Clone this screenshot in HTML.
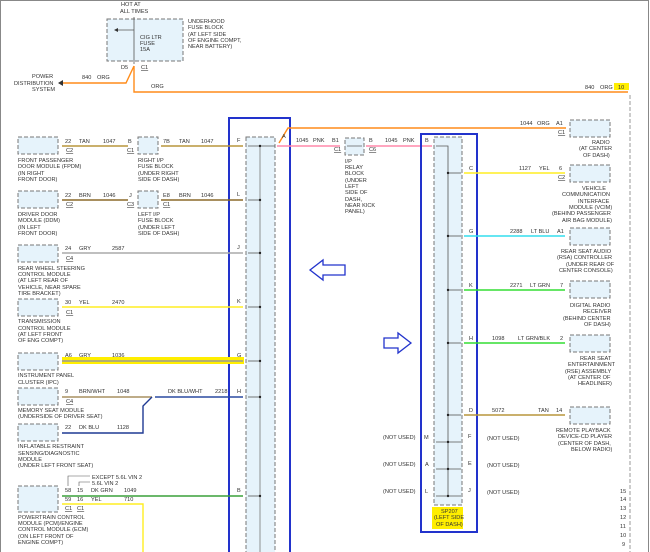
<!DOCTYPE html>
<html><head><meta charset="utf-8"><style>
html,body{margin:0;padding:0;background:#fff}
svg{display:block}
text{font-family:"Liberation Sans",sans-serif;font-size:5.6px;fill:#333}
.b{fill:#e6f3fb;stroke:#777;stroke-dasharray:4,2;stroke-width:1}
.w{fill:none;stroke-width:1.4}
</style></head><body>
<svg width="650" height="552" viewBox="0 0 650 552" xmlns="http://www.w3.org/2000/svg">
<rect x="0.5" y="0.5" width="648" height="560" fill="none" stroke="#888"/>
<!-- top fuse block -->
<text x="121" y="6">HOT AT</text><text x="120" y="13">ALL TIMES</text>
<rect class="b" x="107" y="19" width="76" height="42"/>
<line x1="134" y1="17" x2="134" y2="64" stroke="#555" stroke-width="0.8"/>
<line x1="134" y1="30" x2="117" y2="30" stroke="#555" stroke-width="0.8"/><path d="M114 30l4-2v4z" fill="#333"/>
<text x="140" y="39">CIG LTR</text><text x="140" y="45">FUSE</text><text x="140" y="51">15A</text>
<text x="188" y="23">UNDERHOOD</text><text x="188" y="29">FUSE BLOCK</text><text x="188" y="36">(AT LEFT SIDE</text><text x="188" y="42">OF ENGINE COMPT,</text><text x="188" y="48">NEAR BATTERY)</text>
<text x="121" y="69">D5</text><text x="141" y="69" text-decoration="underline">C1</text>
<path class="w" stroke="#ff8c1a" d="M134 66L126 83H62"/><path d="M58 83l5-3v6z" fill="#333"/>
<text x="82" y="79">840</text><text x="97" y="79">ORG</text>
<text x="32" y="78">POWER</text><text x="14" y="85">DISTRIBUTION</text><text x="32" y="91">SYSTEM</text>
<path class="w" stroke="#ff8c1a" d="M134 66V92H628"/>
<text x="151" y="88">ORG</text>
<text x="585" y="89">840</text><text x="600" y="89">ORG</text>
<rect x="614" y="83" width="15" height="7" fill="#ffee00"/><text x="618" y="89">10</text>
<line x1="630" y1="95" x2="630" y2="552" stroke="#999" stroke-dasharray="4,2"/>
<g font-size="5.4">
<text x="620" y="493">15</text><text x="620" y="501">14</text><text x="620" y="510">13</text><text x="620" y="519">12</text><text x="620" y="528">11</text><text x="620" y="537">10</text><text x="622" y="546">9</text>
</g>
<!-- left splice -->
<rect x="229" y="118" width="61" height="440" fill="none" stroke="#2233cc" stroke-width="2"/>
<rect class="b" x="246" y="137" width="29" height="420"/>
<line x1="260" y1="146" x2="260" y2="552" stroke="#777" stroke-width="0.8"/>
<!-- orange to radio -->
<path class="w" stroke="#ff8c1a" d="M279 143L288 128H566"/>
<text x="282" y="138">A</text>
<text x="520" y="125">1044</text><text x="537" y="125">ORG</text><text x="556" y="125">A1</text><text x="558" y="134" text-decoration="underline">C1</text>
<rect class="b" x="570" y="120" width="40" height="17"/>
<text x="592" y="144">RADIO</text><text x="579" y="150">(AT CENTER</text><text x="583" y="157">OF DASH)</text>
<!-- pink -->
<path class="w" stroke="#ff88aa" d="M277 146H340M366 146H432"/>
<text x="296" y="142">1045</text><text x="313" y="142">PNK</text><text x="332" y="142">B1</text><text x="334" y="151" text-decoration="underline">C1</text>
<rect class="b" x="345" y="138" width="19" height="17"/><line x1="347" y1="146" x2="362" y2="146" stroke="#555" stroke-width="0.7"/>
<text x="369" y="142">B</text><text x="369" y="151" text-decoration="underline">C6</text>
<text x="385" y="142">1045</text><text x="403" y="142">PNK</text><text x="425" y="142">B</text>
<text x="345" y="163">I/P</text><text x="345" y="169">RELAY</text><text x="345" y="175">BLOCK</text><text x="345" y="182">(UNDER</text><text x="345" y="188">LEFT</text><text x="345" y="194">SIDE OF</text><text x="345" y="201">DASH,</text><text x="345" y="207">NEAR KICK</text><text x="345" y="213">PANEL)</text>
<!-- right splice -->
<rect x="421" y="134" width="56" height="398" fill="none" stroke="#2233cc" stroke-width="2"/>
<rect class="b" x="434" y="137" width="28" height="368"/>
<path d="M436 146H448V496" fill="none" stroke="#555" stroke-width="0.8"/>
<rect x="432" y="507" width="31" height="22" fill="#ffee00"/>
<text x="441" y="513">SP207</text><text x="434" y="519">(LEFT SIDE</text><text x="436" y="526">OF DASH)</text>
<!-- right wires -->
<path class="w" stroke="#ffee22" d="M464 173H565"/>
<path class="w" stroke="#33ddee" d="M464 236H565"/>
<path class="w" stroke="#33dd33" d="M464 290H565"/>
<path class="w" stroke="#33dd33" d="M464 343H565"/>
<path class="w" stroke="#b8963c" d="M464 415H565"/>
<g stroke="#555" stroke-width="0.8">
<line x1="448" y1="173" x2="461" y2="173"/><line x1="448" y1="236" x2="461" y2="236"/><line x1="448" y1="290" x2="461" y2="290"/><line x1="448" y1="343" x2="461" y2="343"/><line x1="448" y1="415" x2="461" y2="415"/>
<line x1="436" y1="442" x2="461" y2="442"/><line x1="436" y1="469" x2="461" y2="469"/><line x1="436" y1="496" x2="461" y2="496"/>
</g>
<g fill="#222"><circle cx="448" cy="173" r="1.2"/><circle cx="448" cy="236" r="1.2"/><circle cx="448" cy="290" r="1.2"/><circle cx="448" cy="343" r="1.2"/><circle cx="448" cy="415" r="1.2"/><circle cx="448" cy="442" r="1.2"/><circle cx="448" cy="469" r="1.2"/><circle cx="448" cy="496" r="1.2"/></g>
<text x="469" y="170">C</text><text x="519" y="170">1127</text><text x="539" y="170">YEL</text><text x="559" y="170">6</text><text x="558" y="179" text-decoration="underline">C2</text>
<rect class="b" x="570" y="165" width="40" height="17"/>
<text x="582" y="190">VEHICLE</text><text x="562" y="196">COMMUNICATION</text><text x="578" y="203">INTERFACE</text><text x="569" y="209">MODULE (VCIM)</text><text x="552" y="215">(BEHIND PASSENGER</text><text x="562" y="222">AIR BAG MODULE)</text>
<text x="469" y="233">G</text><text x="510" y="233">2288</text><text x="531" y="233">LT BLU</text><text x="557" y="233">A1</text>
<rect class="b" x="570" y="228" width="40" height="17"/>
<text x="561" y="253">REAR SEAT AUDIO</text><text x="557" y="259">(RSA) CONTROLLER</text><text x="566" y="266">(UNDER REAR OF</text><text x="559" y="272">CENTER CONSOLE)</text>
<text x="469" y="287">K</text><text x="510" y="287">2271</text><text x="530" y="287">LT GRN</text><text x="560" y="287">7</text>
<rect class="b" x="570" y="281" width="40" height="17"/>
<text x="570" y="307">DIGITAL RADIO</text><text x="583" y="313">RECEIVER</text><text x="563" y="320">(BEHIND CENTER</text><text x="584" y="326">OF DASH)</text>
<text x="469" y="340">H</text><text x="492" y="340">1098</text><text x="518" y="340">LT GRN/BLK</text><text x="560" y="340">2</text>
<rect class="b" x="570" y="335" width="40" height="17"/>
<text x="580" y="360">REAR SEAT</text><text x="568" y="366">ENTERTAINMENT</text><text x="565" y="373">(RSE) ASSEMBLY</text><text x="568" y="379">(AT CENTER OF</text><text x="578" y="385">HEADLINER)</text>
<text x="469" y="412">D</text><text x="492" y="412">5072</text><text x="538" y="412">TAN</text><text x="556" y="412">14</text>
<rect class="b" x="570" y="407" width="40" height="17"/>
<text x="556" y="432">REMOTE PLAYBACK</text><text x="558" y="438">DEVICE-CD PLAYER</text><text x="558" y="445">(CENTER OF DASH,</text><text x="571" y="451">BELOW RADIO)</text>
<text x="383" y="439">(NOT USED)</text><text x="424" y="439">M</text><text x="468" y="438">F</text><text x="487" y="440">(NOT USED)</text>
<text x="383" y="466">(NOT USED)</text><text x="425" y="466">A</text><text x="468" y="465">E</text><text x="487" y="467">(NOT USED)</text>
<text x="383" y="493">(NOT USED)</text><text x="425" y="493">L</text><text x="468" y="492">J</text><text x="487" y="494">(NOT USED)</text>
<!-- arrows -->
<path d="M310 270L323 260V265H345V275H323V280Z" fill="#fff" stroke="#2233cc" stroke-width="1.3"/>
<path d="M411 343L398 333V338H384V348H398V353Z" fill="#fff" stroke="#2233cc" stroke-width="1.3"/>
<!-- left wires -->
<path class="w" stroke="#b8963c" d="M62 146H128M161 146H243"/>
<path class="w" stroke="#8b6a2a" d="M62 200H128M161 200H243"/>
<path class="w" stroke="#aaaaaa" d="M62 253H243"/>
<path class="w" stroke="#ffee22" d="M62 307H243"/>
<rect x="62" y="357" width="182" height="7" fill="#ffee00"/><path class="w" stroke="#999" d="M62 361H243"/>
<path class="w" stroke="#a89060" d="M62 397H152"/>
<path class="w" stroke="#2a4aa0" d="M155 397H243"/>
<path class="w" stroke="#1f3a93" d="M62 433H143V406L152 397"/>
<path class="w" stroke="#3aa03a" stroke-width="2" d="M62 496H243"/>
<path class="w" stroke="#ffee22" d="M62 504H143V552"/>
<g stroke="#555" stroke-width="0.8"><line x1="248" y1="146" x2="275" y2="146"/><line x1="248" y1="200" x2="260" y2="200"/><line x1="248" y1="253" x2="260" y2="253"/><line x1="248" y1="307" x2="260" y2="307"/><line x1="248" y1="361" x2="260" y2="361"/><line x1="248" y1="397" x2="260" y2="397"/><line x1="248" y1="496" x2="260" y2="496"/></g>
<g fill="#222"><circle cx="260" cy="146" r="1.2"/><circle cx="260" cy="200" r="1.2"/><circle cx="260" cy="253" r="1.2"/><circle cx="260" cy="307" r="1.2"/><circle cx="260" cy="361" r="1.2"/><circle cx="260" cy="397" r="1.2"/><circle cx="260" cy="496" r="1.2"/></g>
<text x="237" y="142">F</text><text x="237" y="196">L</text><text x="237" y="249">J</text><text x="237" y="303">K</text><text x="237" y="357">G</text><text x="237" y="393">H</text><text x="237" y="492">B</text>
<!-- FPDM -->
<rect class="b" x="18" y="137" width="40" height="17"/>
<text x="65" y="143">22</text><text x="79" y="143">TAN</text><text x="103" y="143">1047</text><text x="128" y="143">B</text><text x="127" y="152" text-decoration="underline">C1</text><text x="66" y="152" text-decoration="underline">C2</text>
<rect class="b" x="138" y="137" width="20" height="17"/>
<text x="163" y="143">7B</text><text x="179" y="143">TAN</text><text x="201" y="143">1047</text>
<text x="18" y="162">FRONT PASSENGER</text><text x="18" y="168">DOOR MODULE (FPDM)</text><text x="18" y="175">(IN RIGHT</text><text x="18" y="181">FRONT DOOR)</text>
<text x="138" y="162">RIGHT I/P</text><text x="138" y="168">FUSE BLOCK</text><text x="138" y="175">(UNDER RIGHT</text><text x="138" y="181">SIDE OF DASH)</text>
<!-- DDM -->
<rect class="b" x="18" y="191" width="40" height="17"/>
<text x="65" y="197">22</text><text x="79" y="197">BRN</text><text x="103" y="197">1046</text><text x="129" y="197">J</text><text x="127" y="206" text-decoration="underline">C3</text><text x="66" y="206" text-decoration="underline">C2</text>
<rect class="b" x="138" y="191" width="20" height="17"/>
<text x="163" y="197">E8</text><text x="179" y="197">BRN</text><text x="201" y="197">1046</text><text x="163" y="206" text-decoration="underline">C1</text>
<text x="18" y="216">DRIVER DOOR</text><text x="18" y="222">MODULE (DDM)</text><text x="18" y="229">(IN LEFT</text><text x="18" y="235">FRONT DOOR)</text>
<text x="138" y="216">LEFT I/P</text><text x="138" y="222">FUSE BLOCK</text><text x="138" y="229">(UNDER LEFT</text><text x="138" y="235">SIDE OF DASH)</text>
<!-- RWS -->
<rect class="b" x="18" y="245" width="40" height="17"/>
<text x="65" y="250">24</text><text x="79" y="250">GRY</text><text x="112" y="250">2587</text><text x="66" y="260" text-decoration="underline">C4</text>
<text x="18" y="270">REAR WHEEL STEERING</text><text x="18" y="276">CONTROL MODULE</text><text x="18" y="282">(AT LEFT REAR OF</text><text x="18" y="289">VEHICLE, NEAR SPARE</text><text x="18" y="295">TIRE BRACKET)</text>
<!-- TCM -->
<rect class="b" x="18" y="299" width="40" height="17"/>
<text x="65" y="304">30</text><text x="79" y="304">YEL</text><text x="112" y="304">2470</text><text x="66" y="314" text-decoration="underline">C1</text>
<text x="18" y="323">TRANSMISSION</text><text x="18" y="330">CONTROL MODULE</text><text x="18" y="336">(AT LEFT FRONT</text><text x="18" y="342">OF ENG COMPT)</text>
<!-- IPC -->
<rect class="b" x="18" y="353" width="40" height="17"/>
<text x="65" y="357">A6</text><text x="79" y="357">GRY</text><text x="112" y="357">1036</text>
<text x="18" y="377">INSTRUMENT PANEL</text><text x="18" y="384">CLUSTER (IPC)</text>
<!-- MSM -->
<rect class="b" x="18" y="388" width="40" height="17"/>
<text x="65" y="393">9</text><text x="79" y="393">BRN/WHT</text><text x="117" y="393">1048</text><text x="66" y="403" text-decoration="underline">C4</text>
<text x="168" y="393">DK BLU/WHT</text><text x="215" y="393">2218</text>
<text x="18" y="412">MEMORY SEAT MODULE</text><text x="18" y="418">(UNDERSIDE OF DRIVER SEAT)</text>
<!-- IRS -->
<rect class="b" x="18" y="424" width="40" height="17"/>
<text x="65" y="429">22</text><text x="79" y="429">DK BLU</text><text x="117" y="429">1128</text>
<text x="18" y="448">INFLATABLE RESTRAINT</text><text x="18" y="455">SENSING/DIAGNOSTIC</text><text x="18" y="461">MODULE</text><text x="18" y="467">(UNDER LEFT FRONT SEAT)</text>
<!-- PCM -->
<path d="M68 486V476H90M79 486V482H90" fill="none" stroke="#555" stroke-width="0.6"/>
<text x="92" y="479">EXCEPT 5.6L VIN 2</text><text x="92" y="485">5.6L VIN 2</text>
<rect class="b" x="18" y="486" width="40" height="26"/>
<text x="65" y="492">58</text><text x="77" y="492">15</text><text x="91" y="492">DK GRN</text><text x="124" y="492">1049</text>
<text x="65" y="501">59</text><text x="77" y="501">16</text><text x="91" y="501">YEL</text><text x="124" y="501">710</text>
<text x="65" y="510" text-decoration="underline">C1</text><text x="77" y="510" text-decoration="underline">C1</text>
<text x="18" y="519">POWERTRAIN CONTROL</text><text x="18" y="525">MODULE (PCM)/ENGINE</text><text x="18" y="531">CONTROL MODULE (ECM)</text><text x="18" y="538">(ON LEFT FRONT OF</text><text x="18" y="544">ENGINE COMPT)</text>
</svg>
</body></html>
